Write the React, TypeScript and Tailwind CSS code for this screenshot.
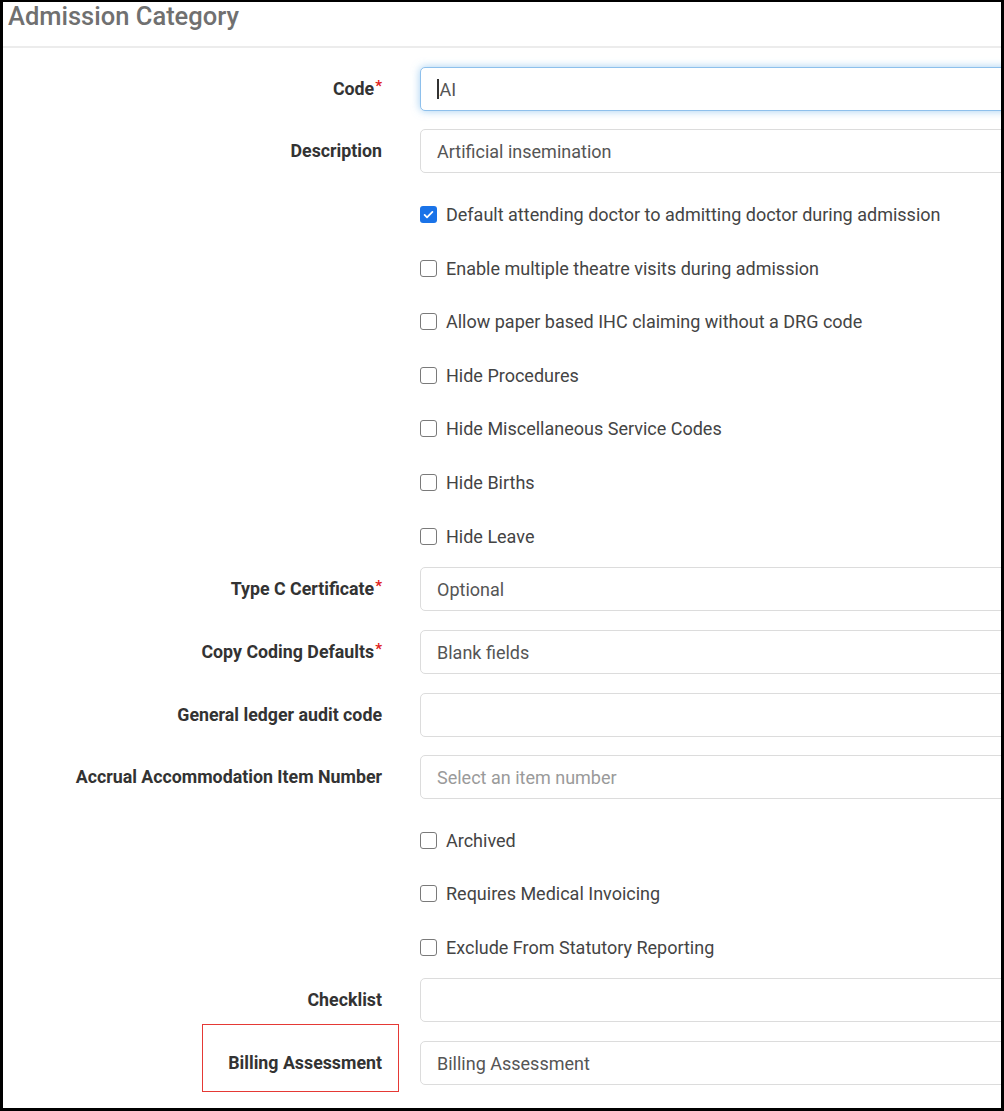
import React from 'react'

type Row =
  | { kind: 'input'; label: string; required?: boolean; value?: string; placeholder?: boolean; focused?: boolean; highlight?: boolean; mt: string }
  | { kind: 'check'; label: string; checked?: boolean; mt: string }

// spacing taken from the screenshot: input→input 19, input→check 31, check→check ~34, check→input 21
const rows: Row[] = [
  { kind: 'input', label: 'Code', required: true, value: 'AI', focused: true, mt: 'mt-[19px]' },
  { kind: 'input', label: 'Description', value: 'Artificial insemination', mt: 'mt-[18px]' },
  { kind: 'check', label: 'Default attending doctor to admitting doctor during admission', checked: true, mt: 'mt-[31px]' },
  { kind: 'check', label: 'Enable multiple theatre visits during admission', mt: 'mt-[34px]' },
  { kind: 'check', label: 'Allow paper based IHC claiming without a DRG code', mt: 'mt-[33px]' },
  { kind: 'check', label: 'Hide Procedures', mt: 'mt-[34px]' },
  { kind: 'check', label: 'Hide Miscellaneous Service Codes', mt: 'mt-[33px]' },
  { kind: 'check', label: 'Hide Births', mt: 'mt-[34px]' },
  { kind: 'check', label: 'Hide Leave', mt: 'mt-[34px]' },
  { kind: 'input', label: 'Type C Certificate', required: true, value: 'Optional', mt: 'mt-[21px]' },
  { kind: 'input', label: 'Copy Coding Defaults', required: true, value: 'Blank fields', mt: 'mt-[19px]' },
  { kind: 'input', label: 'General ledger audit code', mt: 'mt-[19px]' },
  { kind: 'input', label: 'Accrual Accommodation Item Number', value: 'Select an item number', placeholder: true, mt: 'mt-[18px]' },
  { kind: 'check', label: 'Archived', mt: 'mt-[31px]' },
  { kind: 'check', label: 'Requires Medical Invoicing', mt: 'mt-[33px]' },
  { kind: 'check', label: 'Exclude From Statutory Reporting', mt: 'mt-[34px]' },
  { kind: 'input', label: 'Checklist', mt: 'mt-[21px]' },
  { kind: 'input', label: 'Billing Assessment', value: 'Billing Assessment', highlight: true, mt: 'mt-[19px]' },
]

function Checkbox({ checked }: { checked?: boolean }) {
  if (checked) {
    return (
      <span className="flex h-[17px] w-[17px] shrink-0 items-center justify-center rounded-[3px] bg-[#1a73e8]">
        <svg viewBox="0 0 16 16" className="h-[13px] w-[13px]" fill="none">
          <path d="M3.2 8.4l3 3L12.8 4.8" stroke="white" strokeWidth="2.2" strokeLinecap="round" strokeLinejoin="round" />
        </svg>
      </span>
    )
  }
  return <span className="h-[17px] w-[17px] shrink-0 rounded-[3px] border-[1.5px] border-[#7a7a7a] bg-white" />
}

export default function App() {
  return (
    <div
      className="h-[1111px] w-[1004px] overflow-hidden border-b-[3px] border-l-[3px] border-r-[3px] border-t-2 border-black bg-white"
      style={{ fontFamily: 'Roboto, "Liberation Sans", sans-serif' }}
    >
      <div className="flex h-[46px] items-center border-b-2 border-[#ececec] pl-[5px]">
        <h1 className="-mt-[14px] text-[25.5px] font-medium leading-none text-[#707070]">Admission Category</h1>
      </div>

      <div className="w-[1100px]">
        {rows.map((r) =>
          r.kind === 'input' ? (
            <div key={r.label} className={`flex h-[44px] items-center ${r.mt}`}>
              <div className="relative flex h-full w-[379px] shrink-0 items-center justify-end">
                <span className="text-[17.8px] font-bold text-[#333]">{r.label}</span>
                {r.required && <span className="ml-[1px] -mt-[6px] text-[15px] font-bold text-[#e02020]">*</span>}
                {r.highlight && (
                  <span className="absolute -top-[17px] left-[199px] -right-[17px] h-[68px] border-[1.5px] border-[#e53935]" />
                )}
              </div>
              <div
                className={`ml-[38px] flex h-[44px] flex-1 items-center rounded-[5px] border-[1.5px] bg-white pl-[16px] text-[18px] ${
                  r.focused
                    ? 'border-[#8ec0ec] shadow-[0_0_8px_rgba(102,175,233,0.6)]'
                    : 'border-[#dcdcdc]'
                } ${r.placeholder ? 'text-[#9a9a9a]' : 'text-[#555]'}`}
              >
                {r.focused && <span className="mr-[1px] h-[20px] w-[1.5px] bg-[#333]" />}
                {r.value}
              </div>
            </div>
          ) : (
            <div key={r.label} className={`flex h-[20px] items-center ${r.mt}`}>
              <div className="w-[379px] shrink-0" />
              <div className="ml-[38px] flex items-center gap-[9px]">
                <Checkbox checked={r.checked} />
                <span className="text-[18px] text-[#444]">{r.label}</span>
              </div>
            </div>
          ),
        )}
      </div>
    </div>
  )
}
